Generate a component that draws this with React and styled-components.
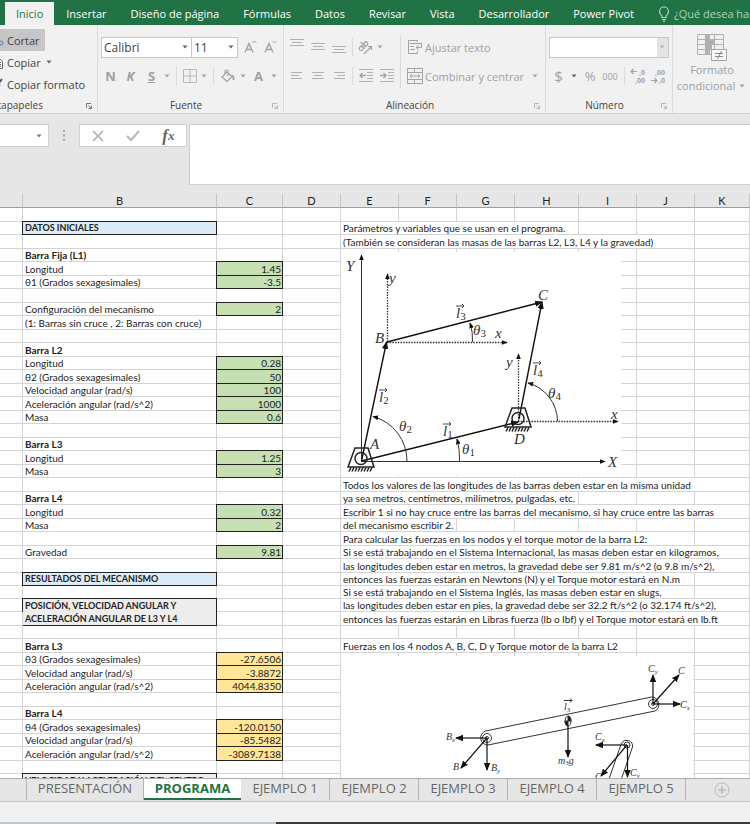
import styled, { createGlobalStyle, css } from 'styled-components';

const GlobalStyle = createGlobalStyle`
	* {
		box-sizing: border-box;
	}

	body {
		margin: 0;
		font-family: 'Open Sans', 'Noto Sans', sans-serif;
		font-size: 11px;
		color: #444;
		background-color: #e6e6e6;
	}

	button, select, input, textarea {
		margin: 0;
		padding: 0;
		border: none;
		border-radius: 0;
		background: none;
		color: inherit;
		font: inherit;
	}
`;

/* ------------------------------ Ventana ------------------------------ */

const Window = styled.div`
	display: flex;
	flex-direction: column;
	height: 100vh;
	overflow: hidden;
`;

const MenuBar = styled.nav`
	display: flex;
	flex: none;
	align-items: flex-end;
	height: 25px;
	padding-left: 5px;
	overflow: hidden;
	background-color: #217346;
`;

const MenuTab = styled.button`
	flex: none;
	height: 23px;
	padding: 0 ${(props) => (props.$active ? 11 : 12)}px;
	color: ${(props) => (props.$active ? '#217346' : '#fff')};
	background-color: ${(props) => (props.$active ? '#f1f1f1' : 'transparent')};
	line-height: 23px;
	white-space: nowrap;
`;

const TellMe = styled(MenuTab)`
	display: flex;
	align-items: center;
	gap: 4px;
	color: #a9d3bb;
`;

/* ------------------------------- Cinta ------------------------------- */

const Ribbon = styled.div`
	display: flex;
	flex: none;
	height: 89px;
	overflow: hidden;
	border-bottom: 1px solid #d2d2d2;
	background-color: #f1f1f1;
`;

const Group = styled.section`
	display: flex;
	flex: none;
	flex-direction: column;
	width: ${(props) => props.$width}px;
	padding: 10px 0 0 3px;
	border-right: 1px solid #dadada;
`;

const ClipboardGroup = styled(Group)`
	padding: 4px 0 0;
`;

const Rows = styled.div`
	display: flex;
	flex-direction: column;
	gap: 5px;
`;

const Row = styled.div`
	display: flex;
	align-items: center;
	height: 24px;
`;

const Columns = styled.div`
	display: flex;
`;

const LeftRows = styled(Rows)`
	width: 114px;
	border-right: 1px solid #dadada;
`;

const RightRows = styled(Rows)`
	padding-left: 6px;
`;

const GroupFooter = styled.div`
	display: flex;
	align-items: center;
	justify-content: center;
	height: 15px;
	margin-top: auto;
	padding-right: 4px;
	font-size: 10px;
	line-height: 15px;
`;

const GroupName = styled.span`
	flex: 1;
	text-align: center;
`;

const ClippedName = styled.span`
	display: flex;
	justify-content: flex-end;
	width: 43px;
	margin-right: auto;
	overflow: hidden;
`;

const Tool = styled.button`
	display: flex;
	flex: none;
	align-items: center;
	justify-content: center;
	width: ${(props) => props.$width || 21}px;
	height: 24px;
	color: #a0a0a0;
	font-size: ${(props) => props.$size || 13}px;
	font-weight: ${(props) => (props.$bold ? 700 : 400)};
`;

const TextTool = styled.button`
	display: flex;
	align-items: center;
	gap: 2px;
	height: 24px;
	color: #a0a0a0;
	white-space: nowrap;

	svg:last-child:not(:first-child) {
		margin-left: 4px;
	}
`;

const ClipTool = styled.button`
	display: flex;
	align-items: center;
	align-self: flex-start;
	gap: 3px;
	height: 22px;
	margin-left: -10px;
	padding-right: 5px;
	background-color: ${(props) => (props.$active ? '#c6c6c6' : 'transparent')};
	white-space: nowrap;
`;

const Rule = styled.span`
	flex: none;
	width: 1px;
	height: 18px;
	margin: 0 ${(props) => props.$gap || 3}px;
	background-color: #dadada;
`;

const SelectBox = styled.label`
	position: relative;
	display: flex;
	flex: none;
	align-items: center;
	width: ${(props) => props.$width}px;
	height: 21px;
	border: 1px solid #c8c8c8;
	background-color: #fff;
	font-size: 12px;

	& + & {
		border-left: none;
	}

	select {
		flex: 1;
		width: 100%;
		height: 100%;
		padding-left: 2px;
		appearance: none;
		outline: none;
	}

	svg {
		position: absolute;
		right: 1px;
		pointer-events: none;
	}
`;

const NumberBox = styled(SelectBox)`
	background: linear-gradient(to left, #e4e4e4 11px, #fff 11px);
`;

const StyleTool = styled.button`
	display: flex;
	flex: none;
	flex-direction: column;
	align-items: center;
	width: 78px;
	padding-top: 8px;
	color: #a0a0a0;
	line-height: 16px;
	white-space: nowrap;

	span {
		display: flex;
		align-items: center;
		gap: 2px;
	}
`;

/* ------------------------- Barra de fórmulas ------------------------- */

const FormulaBar = styled.div`
	display: flex;
	flex: none;
	align-items: flex-start;
	height: 80px;
	padding-top: 10px;
`;

const NameBox = styled(SelectBox)`
	width: 49px;
	height: 23px;
	border-left: none;
	border-color: #cfcfcf;

	svg {
		right: 4px;
	}
`;

const Grip = styled.span`
	display: flex;
	justify-content: center;
	width: 30px;
	padding-top: 6px;
`;

const FormulaTools = styled.div`
	display: flex;
	width: 108px;
	height: 23px;
	border: 1px solid #cfcfcf;
	background-color: #fff;
`;

const FormulaButton = styled.button`
	flex: 1;
	display: flex;
	align-items: center;
	justify-content: center;
	color: #666;
	font: italic bold 17px 'Liberation Serif', serif;

	small {
		font-size: 13px;
	}
`;

const FormulaInput = styled.textarea`
	flex: 1;
	min-width: 0;
	height: 61px;
	margin-left: 2px;
	border: 1px solid #cfcfcf;
	border-right: none;
	background-color: #fff;
	resize: none;
	outline: none;
`;

/* ------------------------------- Hoja -------------------------------- */

const Sheet = styled.main`
	position: relative;
	flex: 1;
	min-height: 0;
	overflow: hidden;
	background-color: #fff;
`;

const Grid = styled.table`
	width: 100%;
	border-spacing: 0;
	table-layout: fixed;
	color: #222;
	font-family: Lato, 'Open Sans', sans-serif;
	font-size: 10px;
	line-height: 12px;
`;

const Col = styled.col`
	width: ${(props) => (props.$width ? `${props.$width}px` : 'auto')};
`;

const ColumnName = styled.th`
	height: 14px;
	padding: 0;
	border-right: 1px solid #c4c4c4;
	border-bottom: 1px solid #9e9e9e;
	background-color: #e6e6e6;
	font-size: 11px;
	font-weight: 400;
`;

const Line = styled.tr`
	height: 13px;

	&:nth-child(odd) {
		height: 14px;
	}

	&:nth-child(29n) {
		height: 13px;
	}
`;

const fills = {
	input: '#c6e0b4',
	output: '#ffe699',
	title: '#ddebf7',
	subtitle: '#ededed'
};

const Cell = styled.td`
	padding: 0 2px;
	border-right: 1px solid #d4d4d4;
	border-bottom: 1px solid #d4d4d4;
	font-size: ${(props) => (props.$small ? 9 : 10)}px;
	font-weight: ${(props) => (props.$bold ? 700 : 400)};
	text-align: ${(props) => (props.$number ? 'right' : 'left')};
	vertical-align: bottom;
	white-space: nowrap;

	${(props) =>
		props.$number &&
		css`
			padding-right: 1px;
		`}

	${(props) =>
		props.$fill &&
		css`
			border-color: #222;
			background-color: ${fills[props.$fill]};
			box-shadow: -1px 0 #222, 0 -1px #222, -1px -1px #222;
		`}
`;

const TallCell = styled(Cell)`
	line-height: 13px;
`;

/* Las figuras flotan sobre las celdas, ancladas a la hoja */
const Figure = styled.svg`
	position: absolute;
	left: 341px;
	top: ${(props) => props.$top}px;
	background-color: #fff;

	text {
		font-family: 'Liberation Serif', serif;
		font-style: italic;
		font-size: ${(props) => props.$size}px;
		fill: #333;
	}

	.sub {
		font-size: ${(props) => props.$sub}px;
	}

	.digit {
		font-style: normal;
	}
`;

/* ------------------------------ Pestañas ----------------------------- */

const SheetTabs = styled.div`
	display: flex;
	flex: none;
	height: 24px;
	padding-left: 26px;
	border-top: 1px solid #ababab;
	border-bottom: 1px solid #c8c8c8;
	background-color: #e6e6e6;
`;

const SheetTab = styled.button`
	flex: none;
	width: ${(props) => props.$width || 89}px;
	height: 21px;
	padding-bottom: 4px;
	border-right: 1px solid #b5b5b5;
	color: #666;
	font-size: 13px;
	line-height: 16px;

	${(props) =>
		props.$active &&
		css`
			padding-bottom: 2px;
			border-right: none;
			border-bottom: 2px solid #217346;
			background-color: #fff;
			color: #217346;
			font-weight: 700;
		`}

	&:first-child {
		border-left: 1px solid #b5b5b5;
	}
`;

const AddSheet = styled.button`
	display: flex;
	align-items: center;
	margin-left: 28px;
`;

const StatusBar = styled.footer`
	flex: none;
	height: 22px;
	background:
		linear-gradient(to right, #c4c8cb 276px, #3b3b3b 276px) bottom / 100% 2px no-repeat,
		#f0f0f0;
`;

/* ------------------------------- Iconos ------------------------------ */

const Caret = ({ color = '#a3a3a3' }) => (
	<svg width="10" height="8" viewBox="0 0 10 8">
		<path d="M2.5 2.5h5L5 5.5z" fill={color} />
	</svg>
);

const Launcher = ({ color = '#b5b5b5' }) => (
	<svg width="8" height="8" viewBox="0 0 8 8" fill="none" stroke={color}>
		<path d="M1.5 6V1.5H6M3.5 3.5l3 3M6.5 3.5v3h-3" />
	</svg>
);

const Lines = ({ d }) => (
	<svg width="15" height="16" viewBox="0 0 15 16" stroke="#b0b0b0">
		<path d={d} />
	</svg>
);

const Bulb = () => (
	<svg width="12" height="16" viewBox="0 0 12 16" fill="none" stroke="#a9d3bb" strokeWidth="1.2">
		<path d="M4 11.5V10C2.5 8.8 1.5 7.5 1.5 5.5a4.5 4.5 0 0 1 9 0C10.5 7.5 9.5 8.8 8 10v1.5zM4 13.5h4M5 15.2h2" />
	</svg>
);

const Scissors = () => (
	<svg width="14" height="16" viewBox="0 0 14 16" fill="none" stroke="#4a7ebb">
		<path d="M3 2l7 8M9 2L3 10" stroke="#666" />
		<circle cx="3" cy="12" r="2" />
		<circle cx="11" cy="11" r="2" />
	</svg>
);

const Copy = () => (
	<svg width="14" height="16" viewBox="0 0 14 16" fill="#fff" stroke="#666">
		<path d="M1.5 1.5h6v9h-6zM5.5 4.5h4l3 3v7h-7zM7 8.5h4M7 10.5h4M7 12.5h4" />
	</svg>
);

const Brush = () => (
	<svg width="14" height="16" viewBox="0 0 14 16">
		<path d="M2 13l3-5 3 3-5 3z" fill="#e0b060" />
		<path d="M6 6l4 4M9 7l3-4" stroke="#555" strokeWidth="2" />
	</svg>
);

const GrowFont = ({ d }) => (
	<svg width="16" height="16" viewBox="0 0 16 16" fill="none" stroke="#a3a3a3">
		<path d="M3 13.5L7 4.5l4 9M4.5 10.5h5" strokeWidth="1.4" />
		<path d={d} />
	</svg>
);

const Borders = () => (
	<svg width="14" height="14" viewBox="0 0 14 14" fill="none" stroke="#b8b8b8">
		<path d="M.5.5h13v13H.5zM7 .5v13M.5 7h13" />
	</svg>
);

const Bucket = () => (
	<svg width="14" height="14" viewBox="0 0 14 14" fill="none" stroke="#a3a3a3" strokeWidth="1.2">
		<path d="M1 8l5-5 5 4.5-5 5zM4 5V2.5a1.5 1.5 0 0 1 3 0V7" />
		<path d="M11 6.5c1.5.8 1.8 2 1.5 4.5" strokeWidth="1.8" />
	</svg>
);

const Orientation = () => (
	<svg width="17" height="16" viewBox="0 0 17 16" fill="none" stroke="#a3a3a3" strokeWidth="1.2">
		<g transform="rotate(-45 6 7)">
			<circle cx="3" cy="7.5" r="2" />
			<path d="M5.2 5v5M7.2 2.5V10" />
			<circle cx="9.5" cy="7.5" r="2" />
		</g>
		<path d="M7 15l7.5-7.5M11 7.5h3.5V11" />
	</svg>
);

const Wrap = () => (
	<svg width="16" height="16" viewBox="0 0 16 16" fill="none" stroke="#a3a3a3">
		<path d="M10.5 3V1.5h-9v13h9V12M3 4.5h11.5v4H9M3 7.5h4M3 10.5h5M11.5 6.5l-2.5 2 2.5 2" />
	</svg>
);

const Merge = () => (
	<svg width="16" height="16" viewBox="0 0 16 16" fill="none" stroke="#a3a3a3">
		<path d="M.5.5h15v15H.5zM.5 4.5h15M.5 11.5h15M7.5.5v4M7.5 11.5v4M3 8h10M5 6L3 8l2 2M11 6l2 2-2 2" />
	</svg>
);

const Indent = ({ arrow }) => (
	<svg width="16" height="14" viewBox="0 0 16 14" fill="none" stroke="#a3a3a3">
		<path d="M1 .5h14M9 3.5h6M9 6.5h6M9 9.5h6M1 12.5h14" stroke="#b0b0b0" />
		<path d={arrow} strokeWidth="1.4" />
	</svg>
);

const Decimals = ({ top, bottom, arrow }) => (
	<svg width="18" height="16" viewBox="0 0 18 16" fill="#a3a3a3" fontSize="7" fontWeight="700">
		<text x={top} y="7">{top > 6 ? ',0' : ',00'}</text>
		<text x={bottom} y="15">{bottom > 6 ? ',0' : ',00'}</text>
		<path d={arrow} fill="none" stroke="#a3a3a3" strokeWidth="1.2" />
	</svg>
);

const Conditional = () => (
	<svg width="32" height="29" viewBox="0 0 32 29" fill="none" stroke="#b0b0b0">
		<path d="M9 1h5v6h4v5h-2v5h-2v5H9z" fill="#b0b0b0" stroke="none" />
		<path d="M1.5 1.5h26v20h-26zM1.5 6.5h26M1.5 11.5h26M1.5 16.5h26M9.5 1.5v20M18.5 1.5v20" />
		<path d="M15.5 16.5h15v11h-15z" fill="#f8f8f8" stroke="#a3a3a3" />
		<path d="M19 20.5h8M19 23.5h8M25.5 18l-4 8" stroke="#888" />
	</svg>
);

/* ------------------------------- Datos ------------------------------- */

const menus = [
	'Insertar',
	'Diseño de página',
	'Fórmulas',
	'Datos',
	'Revisar',
	'Vista',
	'Desarrollador',
	'Power Pivot'
];

const columns = [
	['', 23],
	['B', 194],
	['C', 66],
	['D', 58],
	['E', 58],
	['F', 58],
	['G', 58],
	['H', 64],
	['I', 58],
	['J', 58],
	['K']
];

// Cada fila: etiqueta, valor y nota (texto y columnas que ocupa)
const rows = [
	{},
	{ title: 'DATOS INICIALES', note: 'Parámetros y variables que se usan en el programa.', span: 4 },
	{ note: '(También se consideran las masas de las barras L2, L3, L4 y la gravedad)', span: 6 },
	{ head: 'Barra Fija (L1)' },
	{ label: 'Longitud', input: '1.45' },
	{ label: 'θ1 (Grados sexagesimales)', input: '-3.5' },
	{},
	{ label: 'Configuración del mecanismo', input: '2' },
	{ label: '(1: Barras sin cruce , 2: Barras con cruce)' },
	{},
	{ head: 'Barra L2' },
	{ label: 'Longitud', input: '0.28' },
	{ label: 'θ2 (Grados sexagesimales)', input: '50' },
	{ label: 'Velocidad angular (rad/s)', input: '100' },
	{ label: 'Aceleración angular (rad/s^2)', input: '1000' },
	{ label: 'Masa', input: '0.6' },
	{},
	{ head: 'Barra L3' },
	{ label: 'Longitud', input: '1.25' },
	{ label: 'Masa', input: '3' },
	{ note: 'Todos los valores de las longitudes de las barras deben estar en la misma unidad', span: 7 },
	{ head: 'Barra L4', note: 'ya sea metros, centímetros, milímetros, pulgadas, etc.', span: 4 },
	{
		label: 'Longitud',
		input: '0.32',
		note: 'Escribir 1 si no hay cruce entre las barras del mecanismo, si hay cruce entre las barras',
		span: 7
	},
	{ label: 'Masa', input: '2', note: 'del mecanismo escribir 2.', span: 2 },
	{ note: 'Para calcular las fuerzas en los nodos y el torque motor de la barra L2:', span: 6 },
	{
		label: 'Gravedad',
		input: '9.81',
		note: 'Si se está trabajando en el Sistema Internacional, las masas deben estar en kilogramos,',
		span: 7
	},
	{ note: 'las longitudes deben estar en metros, la gravedad debe ser 9.81 m/s^2 (o 9.8 m/s^2),', span: 7 },
	{
		title: 'RESULTADOS DEL MECANISMO',
		note: 'entonces las fuerzas estarán en Newtons (N) y el Torque motor estará en N.m',
		span: 6
	},
	{ note: 'Si se está trabajando en el Sistema Inglés, las masas deben estar en slugs,', span: 6 },
	{
		subtitle: ['POSICIÓN, VELOCIDAD ANGULAR Y', 'ACELERACIÓN ANGULAR DE L3 Y L4'],
		note: 'las longitudes deben estar en pies, la gravedad debe ser 32.2 ft/s^2 (o 32.174 ft/s^2),',
		span: 7
	},
	{
		merged: true,
		note: 'entonces las fuerzas estarán en Libras fuerza (lb o lbf) y el Torque motor estará en lb.ft',
		span: 7
	},
	{},
	{ head: 'Barra L3', note: 'Fuerzas en los 4 nodos A, B, C, D y Torque motor de la barra L2', span: 5 },
	{ label: 'θ3 (Grados sexagesimales)', output: '-27.6506' },
	{ label: 'Velocidad angular (rad/s)', output: '-3.8872' },
	{ label: 'Aceleración angular (rad/s^2)', output: '4044.8350' },
	{},
	{ head: 'Barra L4' },
	{ label: 'θ4 (Grados sexagesimales)', output: '-120.0150' },
	{ label: 'Velocidad angular (rad/s)', output: '-85.5482' },
	{ label: 'Aceleración angular (rad/s^2)', output: '-3089.7138' },
	{},
	{ title: 'VELOCIDAD Y ACELERACIÓN DEL CENTRO', plain: true }
];

/* ------------------------------ Figuras ------------------------------ */

const ArrowHead = ({ id, size = 8 }) => (
	<marker
		id={id}
		viewBox="0 0 8 8"
		refX="7"
		refY="4"
		markerWidth={size}
		markerHeight={size}
		markerUnits="userSpaceOnUse"
		orient="auto"
	>
		<path d="M0 .8L8 4 0 7.2z" fill="#111" />
	</marker>
);

const Support = ({ x, y }) => (
	<g transform={`translate(${x} ${y})`} fill="none" stroke="#222">
		<path d="M-6-10.5H7l6 19h-26z" strokeWidth="1.5" />
		<circle r="6" strokeWidth="1.5" />
		<path
			d="M-10 9l-2 4M-7 9l-2 4M-4 9l-2 4M-1 9l-2 4M2 9l-2 4M5 9l-2 4M8 9l-2 4M11 9l-2 4"
			strokeWidth="1.5"
		/>
	</g>
);

const Symbol = ({ x, y, name, sub }) => (
	<text x={x} y={y}>
		{name}
		<tspan className={Number(sub) ? 'sub digit' : 'sub'} dy="2">
			{sub}
		</tspan>
	</text>
);

const VectorLabel = ({ x, y, sub }) => (
	<g>
		<Symbol x={x} y={y} name="l" sub={sub} />
		<path d={`M${x} ${y - 12}h8m-2-2l2 2-2 2`} fill="none" stroke="#333" strokeWidth=".9" />
	</g>
);

const Mechanism = () => (
	<Figure
		$top={58}
		$size={15}
		$sub={11}
		width="280"
		height="224"
		viewBox="341 252 280 224"
		role="img"
		aria-label="Mecanismo de cuatro barras"
	>
		<defs>
			<ArrowHead id="axis" size={6} />
			<ArrowHead id="vector" size={8} />
			<ArrowHead id="arc" size={6} />
		</defs>
		<g fill="none" stroke="#333">
			<path d="M361.5 461V255" markerEnd="url(#axis)" />
			<path d="M361 461.5H605" markerEnd="url(#axis)" />
			<g strokeDasharray="1.5 1.2" strokeWidth="1.3">
				<path d="M387.5 342V274" markerEnd="url(#axis)" />
				<path d="M387 342.5H507" markerEnd="url(#axis)" />
				<path d="M518.5 421V354" markerEnd="url(#axis)" />
				<path d="M518 421.5H618" markerEnd="url(#axis)" />
			</g>
			<g stroke="#111" strokeWidth="1.4">
				<path d="M361.5 461L386.5 342" markerEnd="url(#vector)" />
				<path d="M361.5 461L518 422" markerEnd="url(#vector)" />
				<path d="M387 342L542 302" markerEnd="url(#vector)" />
				<path d="M519 419L542 302" markerEnd="url(#vector)" />
			</g>
			<path d="M407 461A46 46 0 0 0 373 416.5" markerEnd="url(#arc)" />
			<path d="M459.5 461Q460 450 457 439" markerEnd="url(#arc)" />
			<path d="M472.5 342Q473 332 470 323" markerEnd="url(#arc)" />
			<path d="M557.5 421A40 40 0 0 0 528 383" markerEnd="url(#arc)" />
		</g>
		<Support x={361} y={458.5} />
		<Support x={518} y={418.5} />
		<text x="346" y="271">Y</text>
		<text x="608" y="467">X</text>
		<text x="389" y="283">y</text>
		<text x="506" y="367">y</text>
		<text x="495" y="338">x</text>
		<text x="611" y="419">x</text>
		<text x="370" y="449">A</text>
		<text x="375" y="343">B</text>
		<text x="538" y="300">C</text>
		<text x="514" y="444">D</text>
		<VectorLabel x={443} y={436} sub="1" />
		<VectorLabel x={379} y={402} sub="2" />
		<VectorLabel x={456} y={318} sub="3" />
		<VectorLabel x={533} y={375} sub="4" />
		<Symbol x={462} y={454} name="θ" sub="1" />
		<Symbol x={399} y={431} name="θ" sub="2" />
		<Symbol x={473} y={335} name="θ" sub="3" />
		<Symbol x={548} y={398} name="θ" sub="4" />
	</Figure>
);

const Forces = () => (
	<Figure
		$top={462}
		$size={10}
		$sub={7}
		width="352"
		height="139"
		viewBox="341 656 352 139"
		role="img"
		aria-label="Fuerzas en los nodos"
	>
		<defs>
			<ArrowHead id="force" size={8} />
		</defs>
		<g fill="none" stroke="#333">
			<path d="M485.5 731L651.5 697A7.5 7.5 0 0 1 655 711L488 745A7.2 7.2 0 0 1 485.5 731" />
			<circle cx="487" cy="738" r="4.5" />
			<circle cx="653" cy="704" r="4.5" />
			<circle cx="487" cy="738" r="1.5" />
			<circle cx="653" cy="704" r="1.5" />
			<path d="M609 779L621.5 743A6 6 0 0 1 632.5 747L620 783" />
			<circle cx="627" cy="745" r="3" />
			<ellipse cx="568" cy="721" rx="3" ry="5" />
			<path d="M568 716a3 5 0 0 1 3 5h-3zM568 726a3 5 0 0 1-3-5h3z" fill="#111" />
			<g stroke="#111" strokeWidth="1.2">
				<path d="M487 738H456" markerEnd="url(#force)" />
				<path d="M487 738V770" markerEnd="url(#force)" />
				<path d="M487 738L461 768" markerEnd="url(#force)" />
				<path d="M653 704V675" markerEnd="url(#force)" />
				<path d="M653 704H680" markerEnd="url(#force)" />
				<path d="M653 704L679 675" markerEnd="url(#force)" />
				<path d="M568 726V757" markerEnd="url(#force)" />
				<path d="M627 745H596" markerEnd="url(#force)" />
				<path d="M627.5 745V777" markerEnd="url(#force)" />
				<path d="M627 745L601 776" markerEnd="url(#force)" />
			</g>
			<path d="M564 700.5h8m-2-2l2 2-2 2" />
		</g>
		<Symbol x={564} y={710} name="l" sub="3" />
		<text x="558" y="764">
			m<tspan className="sub digit" dy="1">3</tspan>
			<tspan dy="-1">g</tspan>
		</text>
		<Symbol x={446} y={740} name="B" sub="x" />
		<Symbol x={491} y={771} name="B" sub="y" />
		<text x="453" y="770">B</text>
		<Symbol x={648} y={672} name="C" sub="y" />
		<Symbol x={680} y={708} name="C" sub="x" />
		<text x="678" y="674">C</text>
		<Symbol x={595} y={740} name="C" sub="x" />
		<Symbol x={630} y={776} name="C" sub="y" />
		<text x="595" y="780">C</text>
	</Figure>
);

/* ----------------------------- Componentes --------------------------- */

const LabelCell = ({ row }) => {
	if (row.merged) return null;
	if (row.subtitle) {
		return (
			<TallCell rowSpan={2} $fill="subtitle" $bold $small>
				{row.subtitle[0]}
				<br />
				{row.subtitle[1]}
			</TallCell>
		);
	}
	if (row.title) {
		return (
			<Cell $fill={row.plain ? 'subtitle' : 'title'} $bold $small>
				{row.title}
			</Cell>
		);
	}
	return <Cell $bold={row.head}>{row.head || row.label}</Cell>;
};

const SheetRow = ({ row }) => {
	const value = row.input || row.output;
	const fill = row.input ? 'input' : 'output';
	const span = row.span || 1;

	return (
		<Line>
			<Cell />
			<LabelCell row={row} />
			<Cell $number $fill={value && fill}>{value}</Cell>
			<Cell />
			<Cell colSpan={span}>{row.note}</Cell>
			{Array.from({ length: 7 - span }, (_, i) => (
				<Cell key={i} />
			))}
		</Line>
	);
};

const RibbonBar = () => (
	<Ribbon>
		<ClipboardGroup $width={98}>
			<ClipTool $active><Scissors />Cortar</ClipTool>
			<ClipTool><Copy />Copiar <Caret color="#666" /></ClipTool>
			<ClipTool><Brush />Copiar formato</ClipTool>
			<GroupFooter>
				<ClippedName>Portapapeles</ClippedName>
				<Launcher color="#777" />
			</GroupFooter>
		</ClipboardGroup>

		<Group $width={186}>
			<Rows>
				<Row>
					<SelectBox $width={91}>
						<select aria-label="Fuente" defaultValue="Calibri">
							<option>Calibri</option>
						</select>
						<Caret color="#666" />
					</SelectBox>
					<SelectBox $width={46}>
						<select aria-label="Tamaño de fuente" defaultValue="11">
							<option>11</option>
						</select>
						<Caret color="#666" />
					</SelectBox>
					<Tool $width={24} aria-label="Aumentar tamaño"><GrowFont d="M10.5 4l2-2 2 2" /></Tool>
					<Tool $width={16} aria-label="Disminuir tamaño"><GrowFont d="M10.5 2l2 2 2-2" /></Tool>
				</Row>
				<Row>
					<Tool $width={19} $bold>N</Tool>
					<Tool $bold><i>K</i></Tool>
					<Tool $bold><u>S</u></Tool>
					<Tool $width={10} aria-label="Opciones de subrayado"><Caret /></Tool>
					<Rule $gap={4} />
					<Tool $width={18} aria-label="Bordes"><Borders /></Tool>
					<Tool $width={10} aria-label="Opciones de bordes"><Caret /></Tool>
					<Rule $gap={4} />
					<Tool $width={20} aria-label="Color de relleno"><Bucket /></Tool>
					<Tool $width={10} aria-label="Opciones de relleno"><Caret /></Tool>
					<Tool $bold>A</Tool>
					<Tool $width={10} aria-label="Opciones de color"><Caret /></Tool>
				</Row>
			</Rows>
			<GroupFooter>
				<GroupName>Fuente</GroupName>
				<Launcher />
			</GroupFooter>
		</Group>

		<Group $width={262}>
			<Columns>
				<LeftRows>
					<Row>
						<Tool aria-label="Alinear arriba"><Lines d="M0 .5h14M2 3.5h10M0 6.5h14" /></Tool>
						<Tool aria-label="Alinear al medio"><Lines d="M0 4.5h14M2 7.5h10M0 10.5h14" /></Tool>
						<Tool aria-label="Alinear abajo"><Lines d="M0 7.5h14M2 10.5h10M0 13.5h14" /></Tool>
						<Rule $gap={2} />
						<Tool $width={20} aria-label="Orientación"><Orientation /></Tool>
						<Tool $width={10} aria-label="Opciones de orientación"><Caret /></Tool>
					</Row>
					<Row>
						<Tool aria-label="Izquierda"><Lines d="M1 4.5h11M1 7.5h8M1 10.5h11" /></Tool>
						<Tool aria-label="Centrar"><Lines d="M1 4.5h12M3 7.5h8M1 10.5h12" /></Tool>
						<Tool aria-label="Derecha"><Lines d="M2 4.5h11M5 7.5h8M2 10.5h11" /></Tool>
						<Rule $gap={2} />
						<Tool aria-label="Disminuir sangría"><Indent arrow="M8 6.5H2M4.5 4L2 6.5 4.5 9" /></Tool>
						<Tool aria-label="Aumentar sangría"><Indent arrow="M1 6.5h6M4.5 4L7 6.5 4.5 9" /></Tool>
					</Row>
				</LeftRows>
				<RightRows>
					<TextTool><Wrap />Ajustar texto</TextTool>
					<TextTool><Merge />Combinar y centrar <Caret /></TextTool>
				</RightRows>
			</Columns>
			<GroupFooter>
				<GroupName>Alineación</GroupName>
				<Launcher />
			</GroupFooter>
		</Group>

		<Group $width={127}>
			<Rows>
				<Row>
					<NumberBox $width={120}>
						<select aria-label="Formato de número" defaultValue="">
							<option value="" />
						</select>
						<Caret color="#b5b5b5" />
					</NumberBox>
				</Row>
				<Row>
					<Tool $width={19} $size={15}>$</Tool>
					<Tool $width={12} aria-label="Opciones de moneda"><Caret color="#666" /></Tool>
					<Tool $width={20} $size={13}>%</Tool>
					<Tool $width={20} $size={9}>000</Tool>
					<Rule $gap={4} />
					<Tool $width={20} aria-label="Aumentar decimales">
						<Decimals top={9} bottom={5} arrow="M1 3.5h6M3.5 1L1 3.5 3.5 6" />
					</Tool>
					<Tool $width={20} aria-label="Disminuir decimales">
						<Decimals top={5} bottom={9} arrow="M1 12.5h6M4.5 10L7 12.5 4.5 15" />
					</Tool>
				</Row>
			</Rows>
			<GroupFooter>
				<GroupName>Número</GroupName>
				<Launcher />
			</GroupFooter>
		</Group>

		<StyleTool>
			<Conditional />
			<span>Formato</span>
			<span>condicional<Caret /></span>
		</StyleTool>
	</Ribbon>
);

const Formulas = () => (
	<FormulaBar>
		<NameBox>
			<select aria-label="Cuadro de nombres" defaultValue="">
				<option value="" />
			</select>
			<Caret color="#777" />
		</NameBox>
		<Grip>
			<svg width="4" height="12" viewBox="0 0 4 12" fill="#a0a0a0">
				<path d="M1 0h2v2H1zM1 4.5h2v2H1zM1 9h2v2H1z" />
			</svg>
		</Grip>
		<FormulaTools>
			<FormulaButton aria-label="Cancelar">
				<svg width="12" height="12" viewBox="0 0 12 12" stroke="#bdbdbd" strokeWidth="1.8">
					<path d="M1 1l10 10M11 1L1 11" />
				</svg>
			</FormulaButton>
			<FormulaButton aria-label="Introducir">
				<svg width="14" height="12" viewBox="0 0 14 12" fill="none" stroke="#bdbdbd" strokeWidth="2.4">
					<path d="M1 6l4 4 8-9" />
				</svg>
			</FormulaButton>
			<FormulaButton>f<small>x</small></FormulaButton>
		</FormulaTools>
		<FormulaInput aria-label="Barra de fórmulas" />
	</FormulaBar>
);

function App() {
	return (
		<Window>
			<GlobalStyle />

			<MenuBar>
				<MenuTab $active>Inicio</MenuTab>
				{menus.map((menu) => (
					<MenuTab key={menu}>{menu}</MenuTab>
				))}
				<TellMe><Bulb />¿Qué desea hacer?</TellMe>
			</MenuBar>

			<RibbonBar />
			<Formulas />

			<Sheet>
				<Grid>
					<colgroup>
						{columns.map(([name, width]) => (
							<Col key={name} $width={width} />
						))}
					</colgroup>
					<thead>
						<tr>
							{columns.map(([name]) => (
								<ColumnName key={name}>{name}</ColumnName>
							))}
						</tr>
					</thead>
					<tbody>
						{rows.map((row, i) => (
							<SheetRow key={i} row={row} />
						))}
					</tbody>
				</Grid>
				<Mechanism />
				<Forces />
			</Sheet>

			<SheetTabs>
				<SheetTab $width={118}>PRESENTACIÓN</SheetTab>
				<SheetTab $width={97} $active>PROGRAMA</SheetTab>
				{[1, 2, 3, 4, 5].map((n) => (
					<SheetTab key={n}>EJEMPLO {n}</SheetTab>
				))}
				<AddSheet aria-label="Nueva hoja">
					<svg width="16" height="16" viewBox="0 0 16 16" fill="none" stroke="#b9b9b9">
						<circle cx="8" cy="8" r="7" />
						<path d="M8 4v8M4 8h8" strokeWidth="1.5" />
					</svg>
				</AddSheet>
			</SheetTabs>
			<StatusBar />
		</Window>
	);
}

export default App;
